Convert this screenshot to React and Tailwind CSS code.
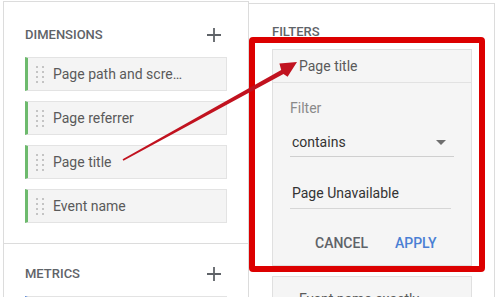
import React from 'react';

const DIMENSIONS = ['Page path and scre…', 'Page referrer', 'Page title', 'Event name'];

function DragHandle() {
  return (
    <div className="grid grid-cols-2 gap-x-[4px] gap-y-[3px] shrink-0">
      {Array.from({ length: 8 }).map((_, i) => (
        <div key={i} className="w-[2px] h-[2px] bg-[#c4c4c4]" />
      ))}
    </div>
  );
}

function Chip({ label, accent = 'border-l-[#6dba6d]' }) {
  return (
    <div className={`h-[34px] w-[202px] flex items-center bg-[#f4f4f4] border border-[#e3e3e3] border-l-[3px] ${accent} pl-[8px]`}>
      <DragHandle />
      {label && <span className="ml-[9px] text-[14px] text-[#5a5a5a] whitespace-nowrap">{label}</span>}
    </div>
  );
}

function Plus() {
  return (
    <svg width="16" height="16" viewBox="0 0 16 16" className="shrink-0">
      <path d="M8 1v14M1 8h14" stroke="#5f6368" strokeWidth="1.8" />
    </svg>
  );
}

function SectionHeader({ title }) {
  return (
    <div className="flex items-center justify-between h-[16px] pr-[26px]">
      <span className="text-[13px] font-medium text-[#5f6368] leading-[16px]">{title}</span>
      <Plus />
    </div>
  );
}

export default function App() {
  return (
    <div
      className="relative w-[503px] h-[297px] bg-white overflow-hidden flex"
      style={{ fontFamily: 'Roboto, "Liberation Sans", sans-serif' }}
    >
      {/* left panel */}
      <div className="ml-[3px] mt-[1px] w-[246px] shrink-0 border-l border-r border-t border-[#dcdcdc] flex flex-col">
        <div className="pl-[21px] pt-[25px] pb-[20px] border-b border-[#dcdcdc]">
          <SectionHeader title="DIMENSIONS" />
          <div className="mt-[14px] flex flex-col gap-[10px]">
            {DIMENSIONS.map(d => (
              <Chip key={d} label={d} />
            ))}
          </div>
        </div>
        <div className="pl-[21px] pt-[22px]">
          <SectionHeader title="METRICS" />
          <div className="mt-[14px]">
            <Chip accent="border-l-[#4d7fd6]" />
          </div>
        </div>
      </div>

      {/* right panel */}
      <div className="mt-[3px] w-[246px] shrink-0 border-t border-r border-[#dcdcdc] pl-[23px]">
        <div className="pt-[20px] h-[16px] box-content text-[13px] font-medium text-[#5f6368] leading-[16px]">FILTERS</div>
        <div className="mt-[9px] w-[200px] border border-[#e0e0e0] bg-[#f5f5f5]">
          <div className="h-[33px] flex items-center pl-[26px] border-b border-[#e2e2e2] text-[14px] text-[#5a5a5a]">
            Page title
          </div>
          <div className="pl-[17px] pr-[17px] pt-[17px] pb-[14px]">
            <div className="text-[14px] text-[#8a8a8a] leading-[16px]">Filter</div>
            <div className="mt-[13px] h-[28px] flex items-center justify-between border-b border-[#cfcfcf] pl-[2px] pr-[8px] text-[14px] text-[#333]">
              <span>contains</span>
              <span className="w-0 h-0 border-l-[5px] border-r-[5px] border-t-[5px] border-l-transparent border-r-transparent border-t-[#6f6f6f]" />
            </div>
            <div className="mt-[22px] h-[30px] w-[161px] flex items-center border-b border-[#d6d6d6] pl-[2px] text-[14px] text-[#333]">
              Page Unavailable
            </div>
            <div className="mt-[26px] flex items-center gap-[27px] pl-[25px] text-[14px] font-medium leading-[16px]">
              <span className="text-[#5f6368]">CANCEL</span>
              <span className="text-[#4a7fd4]">APPLY</span>
            </div>
          </div>
        </div>
        <div className="mt-[10px] w-[200px] h-[34px] border border-[#e0e0e0] bg-[#f5f5f5] pl-[26px] pt-[12px] text-[14px] text-[#5a5a5a]">
          Event name exactly…
        </div>
      </div>

      {/* red highlight box */}
      <div className="absolute left-[249px] top-[37px] w-[236px] h-[235px] border-[6px] border-[#dc0000] rounded-[4px] pointer-events-none" />

      {/* arrow */}
      <svg className="absolute left-0 top-0 pointer-events-none" width="503" height="297">
        <polygon
          points="122.6,159.3 281.2,69.9 279.4,63.6 297,62 287.6,76.8 283.5,74.0 123.4,160.7"
          fill="#c1121f"
        />
      </svg>
    </div>
  );
}
